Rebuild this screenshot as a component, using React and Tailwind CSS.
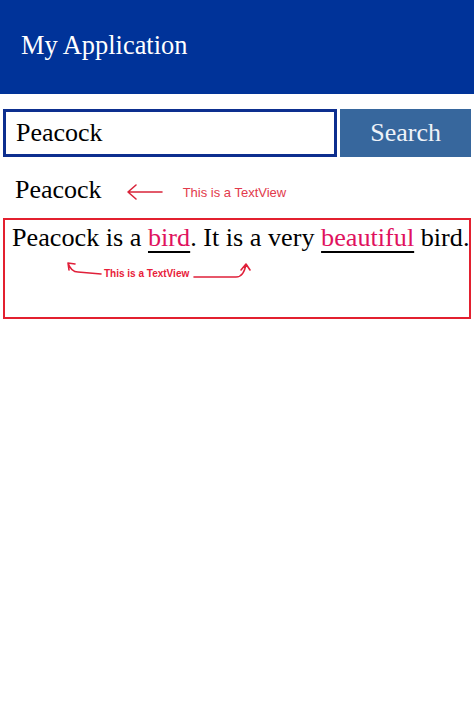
import React from "react";

export default function App() {
  const serif = { fontFamily: '"Liberation Serif", "Times New Roman", serif' };
  const sans = { fontFamily: '"Liberation Sans", Arial, sans-serif' };
  return (
    <div className="w-[474px] h-[711px] bg-white" style={serif}>
      <header className="h-[94px] bg-[#003399] pt-[30px] pl-[21px]">
        <h1 className="text-[26.4px] leading-[30px] text-white">My Application</h1>
      </header>

      <div className="mt-[15px] flex gap-[3px] px-[3px]">
        <div className="w-[335px] h-[48px] border-[3px] border-[#0d2f8f] flex items-center pl-[10px]">
          <span className="text-[26px] leading-[30px] text-black">Peacock</span>
        </div>
        <button className="w-[131px] h-[48px] bg-[#37679d] text-[26px] leading-[30px] text-[#eef2f8] flex items-center justify-center">
          Search
        </button>
      </div>

      <div className="mt-[18px] h-[30px] flex items-center">
        <span className="ml-[15px] text-[26px] leading-[30px] text-black">Peacock</span>
        <svg className="ml-[24px] mt-[4px]" width="38" height="20" viewBox="0 0 38 20" fill="none">
          <path d="M2 10 L36 10 M2 10 L10 3 M2 10 L10 17" stroke="#d9243a" strokeWidth="1.6" strokeLinecap="round" />
        </svg>
        <span className="ml-[19px] mt-[5px] text-[13px] leading-[16px] text-[#e23a4c]" style={sans}>
          This is a TextView
        </span>
      </div>

      <div className="mt-[13px] mx-[3px] h-[101px] border-2 border-[#e3202f] pt-[3px] pl-[7px]">
        <p className="text-[26.2px] leading-[30px] text-black whitespace-nowrap">
          Peacock is a{" "}
          <span className="text-[#e0125e] underline decoration-black decoration-[1.5px] underline-offset-[5px]">bird</span>
          . It is a very{" "}
          <span className="text-[#e0125e] underline decoration-black decoration-[1.5px] underline-offset-[5px]">beautiful</span>{" "}
          bird.
        </p>
        <div className="mt-[7px] h-[24px] flex items-start">
          <svg className="ml-[52px]" width="40" height="24" viewBox="0 0 40 24" fill="none">
            <path d="M4 3 Q7 12 14 12 L37 14 M4 3 L11 4 M4 3 L5 10" stroke="#e0203a" strokeWidth="1.6" strokeLinecap="round" strokeLinejoin="round" />
          </svg>
          <span className="mt-[8px] text-[10px] leading-[12px] font-bold text-[#e8203a]" style={sans}>
            This is a TextView
          </span>
          <svg className="ml-[3px]" width="60" height="24" viewBox="0 0 60 24" fill="none">
            <path d="M2 17 L44 17 Q52 17 54 4 M54 4 L49 10 M54 4 L58 10" stroke="#e0203a" strokeWidth="1.6" strokeLinecap="round" strokeLinejoin="round" />
          </svg>
        </div>
      </div>
    </div>
  );
}
